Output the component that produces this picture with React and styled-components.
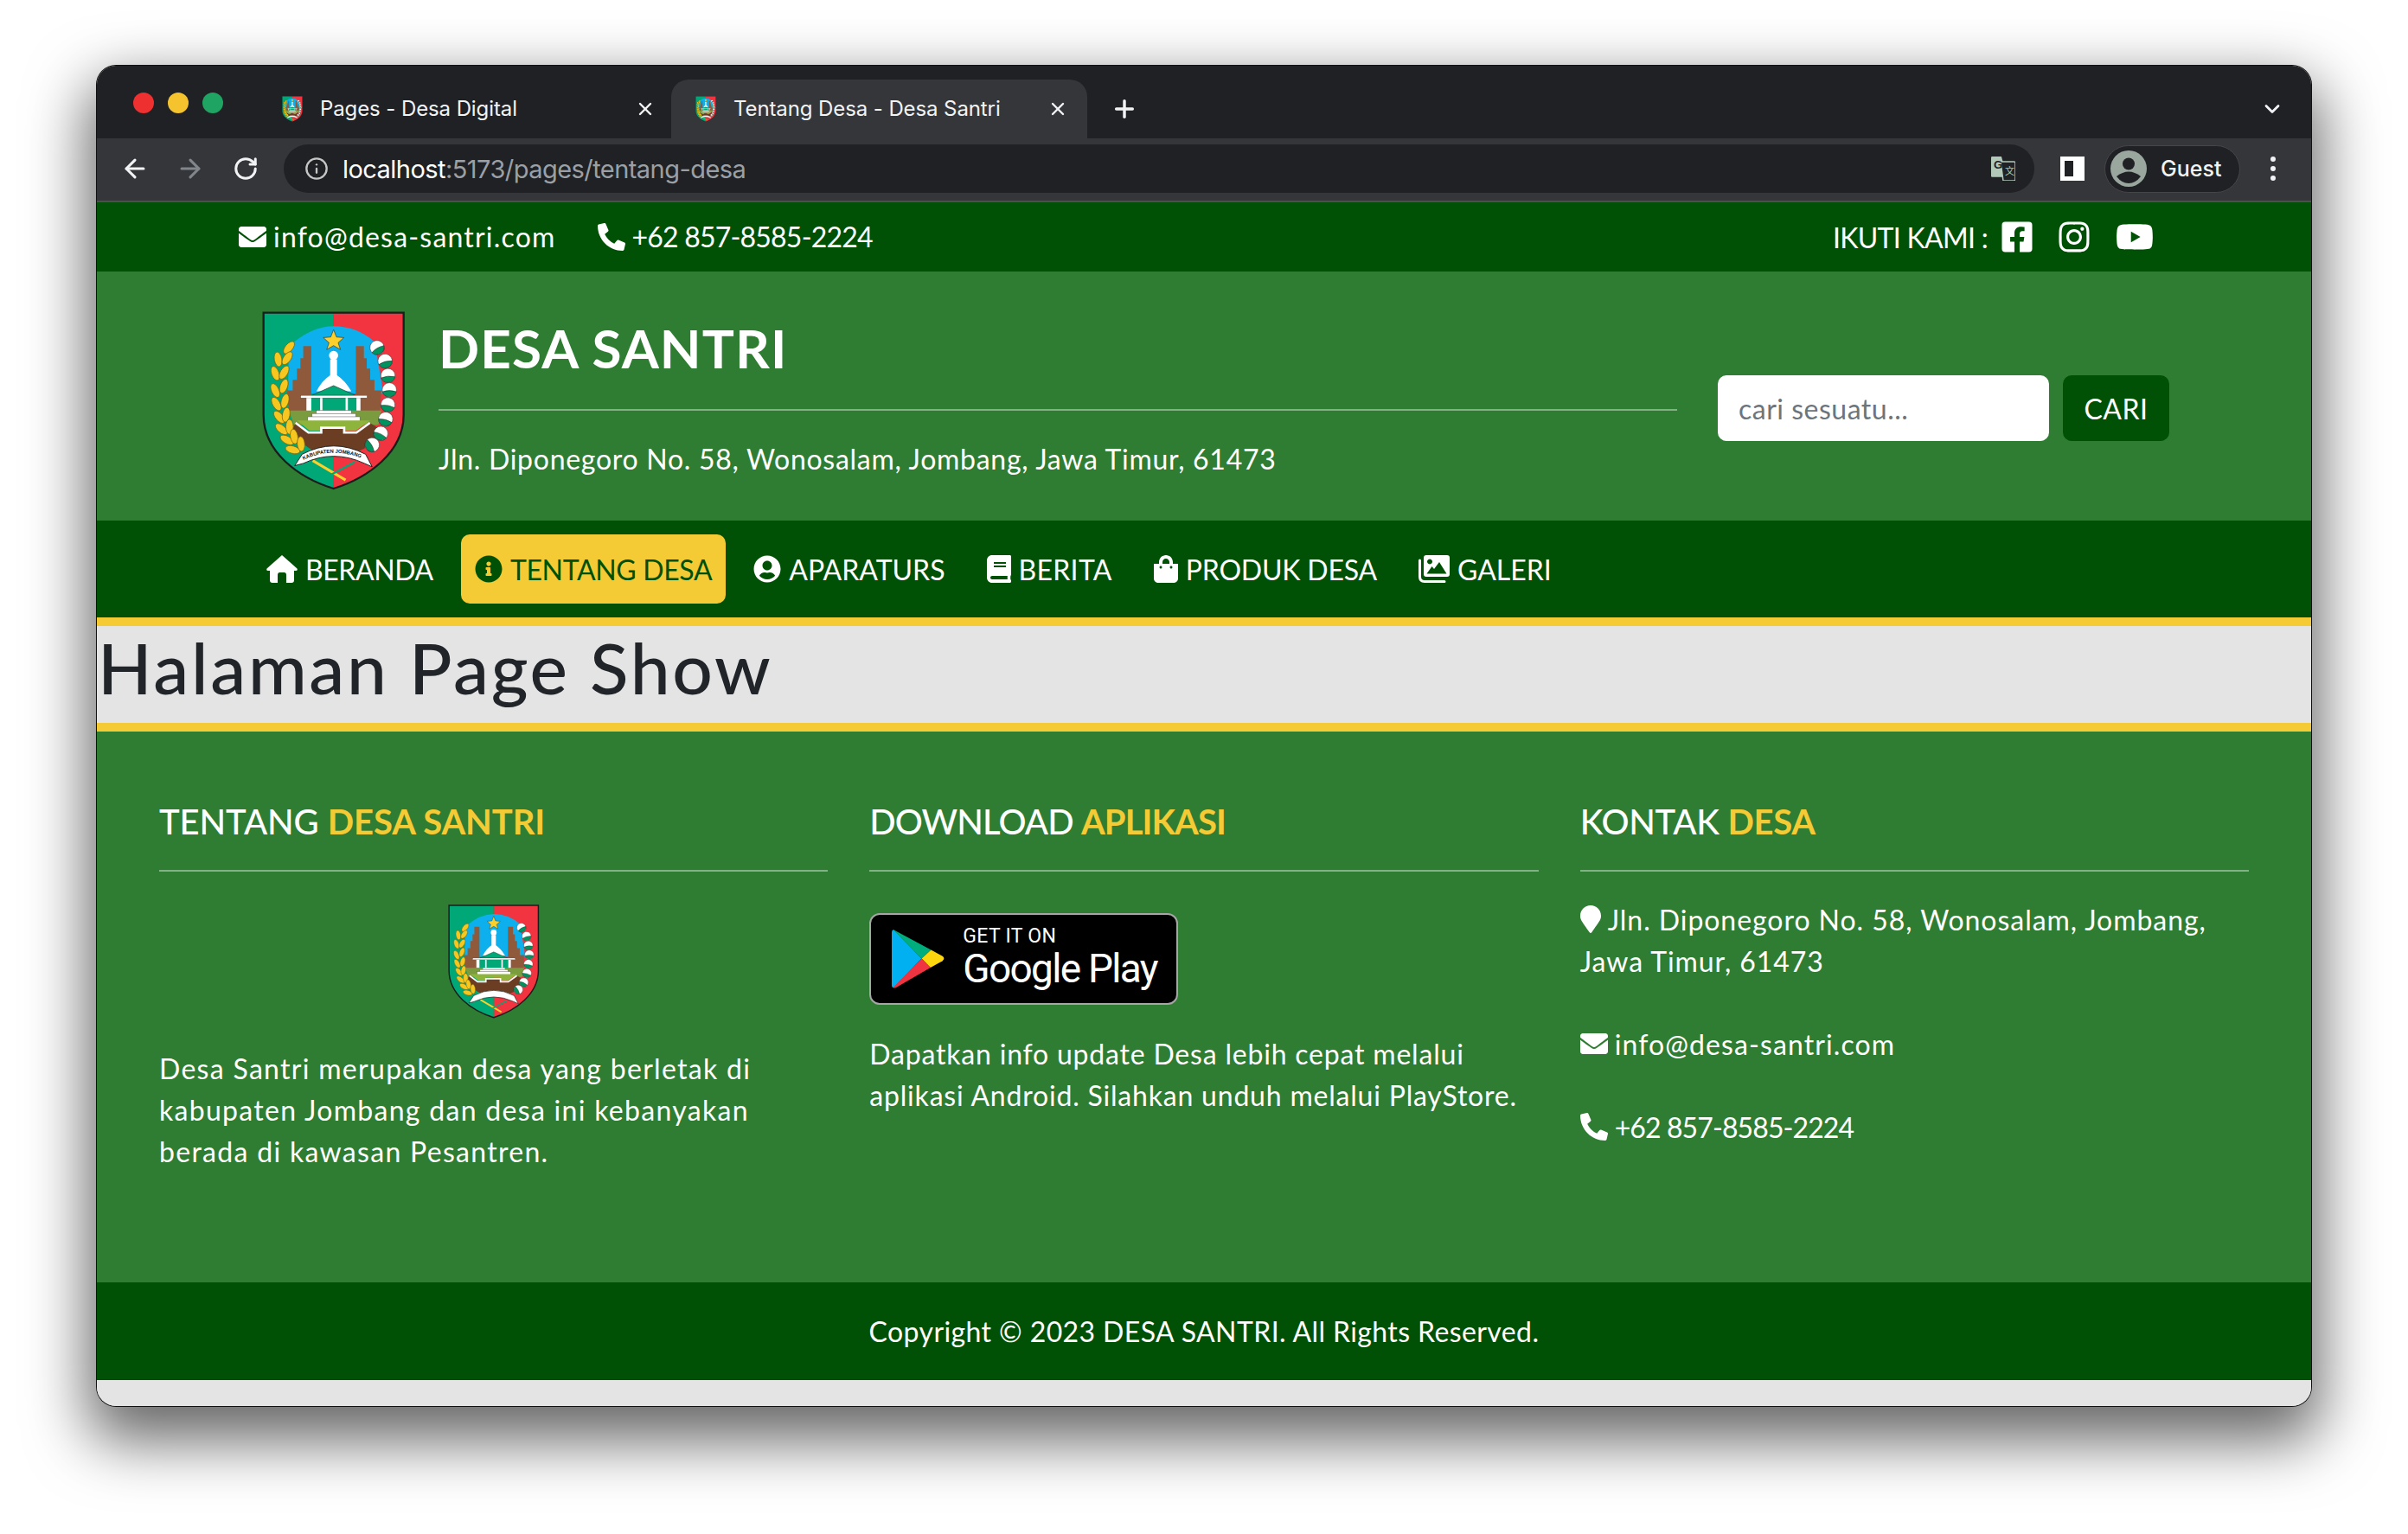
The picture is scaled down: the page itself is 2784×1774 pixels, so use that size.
import React from 'react';
import styled, { createGlobalStyle } from 'styled-components';
import { FaEnvelope, FaPhoneAlt, FaFacebookSquare, FaInstagram, FaYoutube, FaInfoCircle, FaUserCircle, FaBook, FaShoppingBag, FaMapMarker } from 'react-icons/fa';
import { ArrowLeft, ArrowRight, RotateCw, Info, X, Plus, ChevronDown } from 'lucide-react';

const DARK = '#005005';
const MID = '#2e7d32';
const YELLOW = '#f4ca35';
const BODY = '"Lato", "Open Sans", sans-serif';
const UI = '"Inter", "Liberation Sans", sans-serif';

const Global = createGlobalStyle`
  html, body { margin: 0; padding: 0; background: #fff; }
  * { box-sizing: border-box; }
`;
const Desktop = styled.div`
  width: 2784px; height: 1774px; padding: 76px 112px 0; overflow: hidden; background: #fff;
`;
const Win = styled.div`
  width: 2560px; height: 1550px; display: flex; flex-direction: column; overflow: hidden;
  background: #e4e4e4; border-radius: 22px;
  box-shadow: 0 0 0 1px #111, 0 30px 70px 10px rgba(0,0,0,.6);
  font-family: ${BODY}; color: #fff;
`;
const TitleBar = styled.div`
  height: 84px; flex: none; background: #202124; display: flex; align-items: flex-end; padding-left: 186px; padding-right: 31px;
`;
const Lights = styled.div`
  display: flex; gap: 16px; align-self: flex-start; margin: 31px 0 0 -144px; width: 144px; flex: none; padding-left: 0;
`;
const Light = styled.span`
  width: 24px; height: 24px; border-radius: 50%; background: ${p => p.$c}; flex: none;
`;
const Tab = styled.div`
  width: ${p => p.$active ? 481 : 478}px; height: 68px; flex: none; display: flex; align-items: center;
  padding: 0 ${p => p.$active ? 22 : 18}px 0 28px;
  font: 400 24px/1 ${UI}; color: #f1f3f4; border-radius: 20px 20px 0 0;
  background: ${p => p.$active ? '#35363a' : 'transparent'};
`;
const TabText = styled.span`
  margin-left: 20px; flex: 1; white-space: nowrap; letter-spacing: -.1px;
`;
const NewTab = styled.div`
  display: flex; align-items: center; height: 68px; margin-left: 27px; flex: 1;
`;
const Expand = styled.div`
  display: flex; align-items: center; height: 68px; color: #f1f3f4;
`;
const ToolBar = styled.div`
  height: 74px; flex: none; background: #35363a; border-bottom: 2px solid #4d4e50; display: flex; align-items: center; padding: 0 0 2px 26px;
`;
const NavIcon = styled.span`
  display: flex; width: 36px; justify-content: center; margin-left: ${p => p.$ml || 0}px; color: ${p => p.$dim ? '#80868b' : '#f1f3f4'};
`;
const Omni = styled.div`
  width: 2024px; height: 56px; border-radius: 28px; background: #202124; display: flex; align-items: center; padding: 0 22px 0 24px; margin-left: 26px; flex: none;
`;
const Url = styled.div`
  margin-left: 16px; flex: 1; font: 400 29px/1 ${UI}; letter-spacing: -.55px; color: #fff; white-space: nowrap;
  span { color: #9aa0a6; }
`;
const SidePanel = styled.div`
  width: 28px; height: 28px; margin-left: 30px; border: 5px solid #fff; border-right-width: 13px; flex: none; background: #202124;
`;
const Guest = styled.div`
  width: 157px; height: 55px; margin-left: 23px; border-radius: 28px; background: #202124; border: 1px solid #45464a; display: flex; align-items: center; padding-left: 6px;
  font: 500 25px/1 ${UI}; color: #f1f3f4; gap: 16px; flex: none;
`;
const Kebab = styled.div`
  margin-left: 35px; display: flex; flex-direction: column; gap: 5px;
  i { width: 6px; height: 6px; border-radius: 50%; background: #f1f3f4; display: block; }
`;
const TopBar = styled.div`
  height: 80px; flex: none; background: ${DARK}; display: flex; align-items: center; justify-content: space-between; padding: 0 182px 0 164px;
`;
const TopGroup = styled.div`
  display: flex; align-items: center;
`;
const Contact = styled.span`
  display: inline-flex; align-items: center; gap: 8px; font-size: 32px; line-height: 48px; margin-right: 48px; letter-spacing: ${p => p.$ls}px; white-space: nowrap;
  svg { flex: none; }
`;
const Follow = styled.span`
  font-size: 32px; letter-spacing: -.7px; margin-right: 14px; white-space: nowrap;
`;
const Social = styled.span`
  display: flex; margin-left: ${p => p.$ml || 0}px;
`;
const Header = styled.header`
  height: 288px; flex: none; background: ${MID}; display: flex; align-items: flex-start; padding: 46px 0 0 191px;
`;
const HeadMid = styled.div`
  width: 1432px; margin-left: 38px; flex: none;
`;
const Brand = styled.h1`
  margin: 0; font-size: 62px; font-weight: 700; line-height: 84px; letter-spacing: 1.1px; padding-bottom: 29px; border-bottom: 2px solid rgba(255,255,255,.4);
`;
const Address = styled.p`
  margin: 32px 0 0; font-size: 32px; line-height: 48px; letter-spacing: .72px;
`;
const Search = styled.form`
  display: flex; gap: 16px; margin: 74px 0 0 47px;
`;
const SearchBox = styled.input`
  width: 383px; height: 76px; border: 0; border-radius: 10px; background: #fff; padding: 0 24px; font: 400 32px ${BODY}; letter-spacing: .5px;
  &::placeholder { color: #6c757d; opacity: 1; }
`;
const SearchBtn = styled.button`
  width: 123px; height: 76px; border: 0; border-radius: 10px; background: ${DARK}; color: #fff; font: 400 32px ${BODY}; letter-spacing: .5px; padding: 0;
`;
const Nav = styled.nav`
  height: 112px; flex: none; background: ${DARK}; display: flex; align-items: flex-start; padding: 16px 0 0 180px; gap: 16px;
`;
const NavItem = styled.a`
  height: 80px; padding: 0 16px; display: flex; align-items: center; gap: 9px; border-radius: 10px; font-size: 32px; white-space: nowrap; letter-spacing: ${p => p.$ls}px;
  background: ${p => p.$active ? YELLOW : 'transparent'}; color: ${p => p.$active ? DARK : '#fff'};
  svg { flex: none; }
`;
const NarrowBook = styled(FaBook)`
  width: 28px; height: 32px;
`;
const NarrowBag = styled(FaShoppingBag)`
  width: 28px; height: 32px;
`;
const Pin = styled(FaMapMarker)`
  width: 24px; height: 32px;
`;
const Band = styled.div`
  height: 132px; flex: none; background: #e4e4e4; border-top: 10px solid ${YELLOW}; border-bottom: 10px solid ${YELLOW};
`;
const PageTitle = styled.h2`
  margin: 0; padding-left: 1px; font-size: 82px; font-weight: 500; line-height: 94px; color: #212529; letter-spacing: 2.7px; white-space: nowrap;
`;
const Footer = styled.footer`
  height: 637px; flex: none; background: ${MID}; padding: 74px 72px 0; display: grid; grid-template-columns: repeat(3, 1fr); gap: 48px;
`;
const Col = styled.div``;
const ColTitle = styled.h3`
  margin: 0; padding-bottom: 26px; border-bottom: 2px solid rgba(255,255,255,.4); font-size: 40px; line-height: 60px; font-weight: 500; letter-spacing: ${p => p.$ls}px;
  b { color: ${YELLOW}; font-weight: 700; }
`;
const ColText = styled.p`
  margin: ${p => p.$mt || 0}px 0 ${p => p.$mb || 0}px; font-size: 32px; line-height: 48px; letter-spacing: ${p => p.$ls}px;
  svg { vertical-align: -3px; margin-right: 8px; }
`;
const ColLogo = styled.div`
  display: flex; justify-content: center; margin-top: 38px;
`;
const Badge = styled.div`
  width: 357px; height: 106px; margin-top: 48px; background: #000; border: 2px solid #a6a6a6; border-radius: 12px; display: flex; align-items: center; padding-left: 24px;
  color: #fff; font-family: "Roboto", sans-serif;
`;
const BadgeText = styled.div`
  margin-left: 21px; display: flex; flex-direction: column;
`;
const GetIt = styled.span`
  font-size: 23px; line-height: 24px; letter-spacing: .3px;
`;
const Gplay = styled.span`
  font-size: 46px; line-height: 50px; letter-spacing: -1.7px; margin-bottom: 2px;
`;
const Copy = styled.div`
  height: 113px; flex: none; background: ${DARK}; display: flex; align-items: center; justify-content: center; font-size: 32px; letter-spacing: .4px;
`;
const Strip = styled.div`
  flex: 1; background: #e4e4e4;
`;

const cotton = [[530,185,-30],[558,232,-15],[568,283,-5],[573,333,0],[568,385,10],[560,435,15],[543,485,25],[513,525,60]];
const leaves = [[222,185,40],[184,226,-10],[216,222,35],[174,275,-20],[205,272,30],[174,335,-25],[204,320,20],[178,382,-30],[208,372,15],[188,428,-40],[212,420,10],[196,470,-50],[224,462,0],[215,508,-60],[240,496,-10],[235,542,-75],[264,522,-5]];

const Shield = ({ w, h, full }) => (
  <svg width={w} height={h} viewBox="128 58 502 626" style={{ flex: 'none' }}>
    <path d="M133 63H378V678C255 640 133 550 133 420Z" fill="#00a878" />
    <path d="M378 63H623V420C623 550 500 640 378 678Z" fill="#f1343f" />
    <path d="M222 180Q300 110 378 110Q460 110 522 165L552 345H218Z" fill="#0db0ec" />
    <g fill="#8f5a3c">
      <polygon points="272,180 300,180 300,340 235,340 235,298 250,298 250,258 262,258 262,222 272,222" />
      <polygon points="484,180 456,180 456,340 521,340 521,298 506,298 506,258 494,258 494,222 484,222" />
      <polygon points="215,335 300,335 300,408 222,408" />
      <polygon points="456,335 545,335 540,408 456,408" />
    </g>
    <polygon points="378,122 388,148 414,150 394,168 402,192 378,178 354,192 362,168 342,150 368,148" fill="#fbd02a" stroke="#333" strokeWidth="2" />
    <g fill="#fff">
      <circle cx="378" cy="212" r="16" />
      <rect x="366" y="226" width="24" height="60" />
      <path d="M318 338Q338 300 366 282H390Q418 300 440 338Z" />
    </g>
    <polygon points="302,352 378,318 454,352" fill="#00a878" stroke="#1c3a2a" strokeWidth="2" />
    <rect x="300" y="360" width="160" height="46" fill="#00a878" />
    <rect x="263" y="352" width="232" height="9" fill="#fff" stroke="#333" strokeWidth="1" />
    <g fill="#fff">
      <rect x="283" y="361" width="17" height="45" />
      <rect x="331" y="361" width="8" height="45" />
      <rect x="420" y="361" width="8" height="45" />
      <rect x="458" y="361" width="14" height="45" />
    </g>
    <path d="M222 405H545L535 455H240Z" fill="#7b9c3e" />
    <g fill="#fff" stroke="#445" strokeWidth="1">
      <rect x="318" y="405" width="122" height="11" />
      <rect x="303" y="416" width="152" height="11" />
      <rect x="288" y="427" width="182" height="17" />
    </g>
    <path d="M245 448L290 482H335V465H415V482H458L505 448L540 470C520 530 470 560 378 560C300 560 250 510 235 470Z" fill="#6b3d22" />
    <path d="M250 440H505L455 476H415V460H335V476H295Z" fill="#8fb43c" />
    <path d="M245 448L290 482H335V465H415V482H458L505 448" fill="none" stroke="#fff" strokeWidth="8" />
    <path d="M305 580L420 648" stroke="#fbd02a" strokeWidth="9" fill="none" />
    <path d="M452 585L335 648" stroke="#00a878" strokeWidth="7" fill="none" />
    <path d="M272 590L242 598L268 558Q378 500 490 558L513 602L486 590Q378 540 272 590Z" fill="#fff" stroke="#222" strokeWidth="3" />
    {full && <path id="band-path" d="M272 578Q378 528 490 578" fill="none" />}
    {full && (
      <text fontFamily='"Liberation Sans", sans-serif' fontWeight="700" fontSize="18" fill="#111">
        <textPath href="#band-path">KABUPATEN JOMBANG</textPath>
      </text>
    )}
    {leaves.map(([x, y, r], i) => (
      <ellipse key={i} cx={x} cy={y} rx="13" ry="26" transform={`rotate(${r} ${x} ${y})`} fill="#f6c71e" stroke="#7a5d0c" strokeWidth="2" />
    ))}
    {cotton.map(([x, y, r], i) => (
      <g key={i} transform={`rotate(${r} ${x} ${y})`}>
        <circle cx={x} cy={y} r="25" fill="#fff" stroke="#333" strokeWidth="1.5" />
        <path d={`M${x - 24} ${y + 6}Q${x} ${y - 2} ${x + 24} ${y + 6}A25 25 0 0 1 ${x - 24} ${y + 6}Z`} fill="#00935f" stroke="#222" strokeWidth="1.5" />
      </g>
    ))}
    <path d="M133 63H623V420C623 550 500 640 378 678C255 640 133 550 133 420Z" fill="none" stroke="#1c1c1c" strokeWidth="7" />
  </svg>
);

const HomeIcon = () => (
  <svg width="36" height="32" viewBox="0 0 36 32" fill="currentColor"><path d="M18 0L35.5 15.5Q36.5 18 34 18H32V29Q32 32 29 32H23V23Q23 20 20.5 20H15.5Q13 20 13 23V32H7Q4 32 4 29V18H2Q-.5 18 .5 15.5Z" /></svg>
);
const ImagesIcon = () => (
  <svg width="36" height="32" viewBox="0 0 36 32" fill="none">
    <path d="M1.5 6V25Q1.5 30.5 7 30.5H30" stroke="currentColor" strokeWidth="3" strokeLinecap="round" />
    <path fillRule="evenodd" fill="currentColor" d="M9 0H33Q36 0 36 3V22Q36 25 33 25H9Q6 25 6 22V3Q6 0 9 0ZM13 4.5A3 3 0 1 0 13.01 4.5ZM9.5 21.5H32.5L24 8L18 16L15.5 13Z" />
  </svg>
);
const PlayLogo = () => (
  <svg width="61" height="68" viewBox="158 137 184 205" style={{ flex: 'none' }}>
    <path d="M158 146Q158 137 165 138L262 238L165 340Q158 340 158 330Z" fill="#00b0f0" />
    <path d="M163 137L295 208L262 238Z" fill="#00ad7c" />
    <path d="M295 208L335 230Q345 238 335 246L293 270L262 238Z" fill="#fdd60e" />
    <path d="M262 238L293 270L172 340Q165 342 163 339Z" fill="#ef3340" />
  </svg>
);
const Translate = () => (
  <svg width="28" height="28" viewBox="0 0 28 28" style={{ flex: 'none' }}>
    <path d="M0 1.5Q0 0 1.5 0H14L22 28H1.5Q0 28 0 26.5Z" fill="#b2c9b9" transform="scale(.85 .85)" />
    <path d="M11 6H26.5Q28 6 28 7.5V26.5Q28 28 26.5 28H14Z" fill="#202124" stroke="#b2c9b9" strokeWidth="1.5" />
    <text x="3" y="14" fontFamily='"Liberation Sans", sans-serif' fontWeight="700" fontSize="13" fill="#202124">G</text>
    <text x="16" y="21" fontFamily='"Noto Sans CJK SC", sans-serif' fontSize="11" fill="#b2c9b9">文</text>
  </svg>
);
const Avatar = () => (
  <svg width="42" height="42" viewBox="0 0 42 42" style={{ flex: 'none' }}>
    <circle cx="21" cy="21" r="21" fill="#9aa79f" />
    <circle cx="21" cy="15.5" r="7" fill="#202124" />
    <path d="M7 30Q21 19 35 30Q29 38 21 38Q13 38 7 30Z" fill="#202124" />
  </svg>
);

const navItems = [
  { label: 'BERANDA', icon: <HomeIcon />, ls: -.4 },
  { label: 'TENTANG DESA', icon: <FaInfoCircle size={32} />, active: true, ls: -.35 },
  { label: 'APARATURS', icon: <FaUserCircle size={32} />, ls: 0 },
  { label: 'BERITA', icon: <NarrowBook />, ls: .3 },
  { label: 'PRODUK DESA', icon: <NarrowBag />, ls: -.2 },
  { label: 'GALERI', icon: <ImagesIcon />, ls: 0 },
];

export default function App() {
  return (
    <Desktop>
      <Global />
      <Win>
        <TitleBar>
          <Lights>
            <Light $c="#ee3030" /><Light $c="#f4c32d" /><Light $c="#1fa463" />
          </Lights>
          <Tab>
            <Shield w={24} h={30} />
            <TabText>Pages - Desa Digital</TabText>
            <X size={24} strokeWidth={2.4} />
          </Tab>
          <Tab $active>
            <Shield w={24} h={30} />
            <TabText>Tentang Desa - Desa Santri</TabText>
            <X size={24} strokeWidth={2.4} />
          </Tab>
          <NewTab><Plus size={32} strokeWidth={2.6} color="#f1f3f4" /></NewTab>
          <Expand><ChevronDown size={28} strokeWidth={2.4} /></Expand>
        </TitleBar>
        <ToolBar>
          <NavIcon><ArrowLeft size={34} strokeWidth={2.2} /></NavIcon>
          <NavIcon $dim $ml={28}><ArrowRight size={34} strokeWidth={2.2} /></NavIcon>
          <NavIcon $ml={28}><RotateCw size={30} strokeWidth={2.4} /></NavIcon>
          <Omni>
            <Info size={28} color="#c4c7c5" strokeWidth={2} />
            <Url>localhost<span>:5173/pages/tentang-desa</span></Url>
            <Translate />
          </Omni>
          <SidePanel />
          <Guest><Avatar />Guest</Guest>
          <Kebab><i /><i /><i /></Kebab>
        </ToolBar>
        <TopBar>
          <TopGroup>
            <Contact $ls={1.2}><FaEnvelope size={32} />info@desa-santri.com</Contact>
            <Contact $ls={-.8}><FaPhoneAlt size={32} />+62 857-8585-2224</Contact>
          </TopGroup>
          <TopGroup>
            <Follow>IKUTI KAMI :</Follow>
            <Social><FaFacebookSquare size={40} /></Social>
            <Social $ml={26}><FaInstagram size={40} /></Social>
            <Social $ml={28}><FaYoutube size={44} /></Social>
          </TopGroup>
        </TopBar>
        <Header>
          <Shield w={166} h={207} full />
          <HeadMid>
            <Brand>DESA SANTRI</Brand>
            <Address>Jln. Diponegoro No. 58, Wonosalam, Jombang, Jawa Timur, 61473</Address>
          </HeadMid>
          <Search onSubmit={e => e.preventDefault()}>
            <SearchBox placeholder="cari sesuatu..." />
            <SearchBtn>CARI</SearchBtn>
          </Search>
        </Header>
        <Nav>
          {navItems.map(n => (
            <NavItem key={n.label} $active={n.active} $ls={n.ls}>{n.icon}{n.label}</NavItem>
          ))}
        </Nav>
        <Band><PageTitle>Halaman Page Show</PageTitle></Band>
        <Footer>
          <Col>
            <ColTitle $ls={-.1}>TENTANG <b>DESA SANTRI</b></ColTitle>
            <ColLogo><Shield w={106} h={132} /></ColLogo>
            <ColText $mt={34} $ls={1.3}>Desa Santri merupakan desa yang berletak di kabupaten Jombang dan desa ini kebanyakan berada di kawasan Pesantren.</ColText>
          </Col>
          <Col>
            <ColTitle $ls={-.9}>DOWNLOAD <b>APLIKASI</b></ColTitle>
            <Badge>
              <PlayLogo />
              <BadgeText>
                <GetIt>GET IT ON</GetIt>
                <Gplay>Google Play</Gplay>
              </BadgeText>
            </Badge>
            <ColText $mt={33} $ls={.8}>Dapatkan info update Desa lebih cepat melalui aplikasi Android. Silahkan unduh melalui PlayStore.</ColText>
          </Col>
          <Col>
            <ColTitle $ls={-.3}>KONTAK <b>DESA</b></ColTitle>
            <ColText $mt={32} $mb={48} $ls={.95}><Pin />Jln. Diponegoro No. 58, Wonosalam, Jombang, Jawa Timur, 61473</ColText>
            <ColText $mb={48} $ls={1.1}><FaEnvelope size={32} />info@desa-santri.com</ColText>
            <ColText $ls={-.9}><FaPhoneAlt size={32} />+62 857-8585-2224</ColText>
          </Col>
        </Footer>
        <Copy>Copyright © 2023 DESA SANTRI. All Rights Reserved.</Copy>
        <Strip />
      </Win>
    </Desktop>
  );
}
